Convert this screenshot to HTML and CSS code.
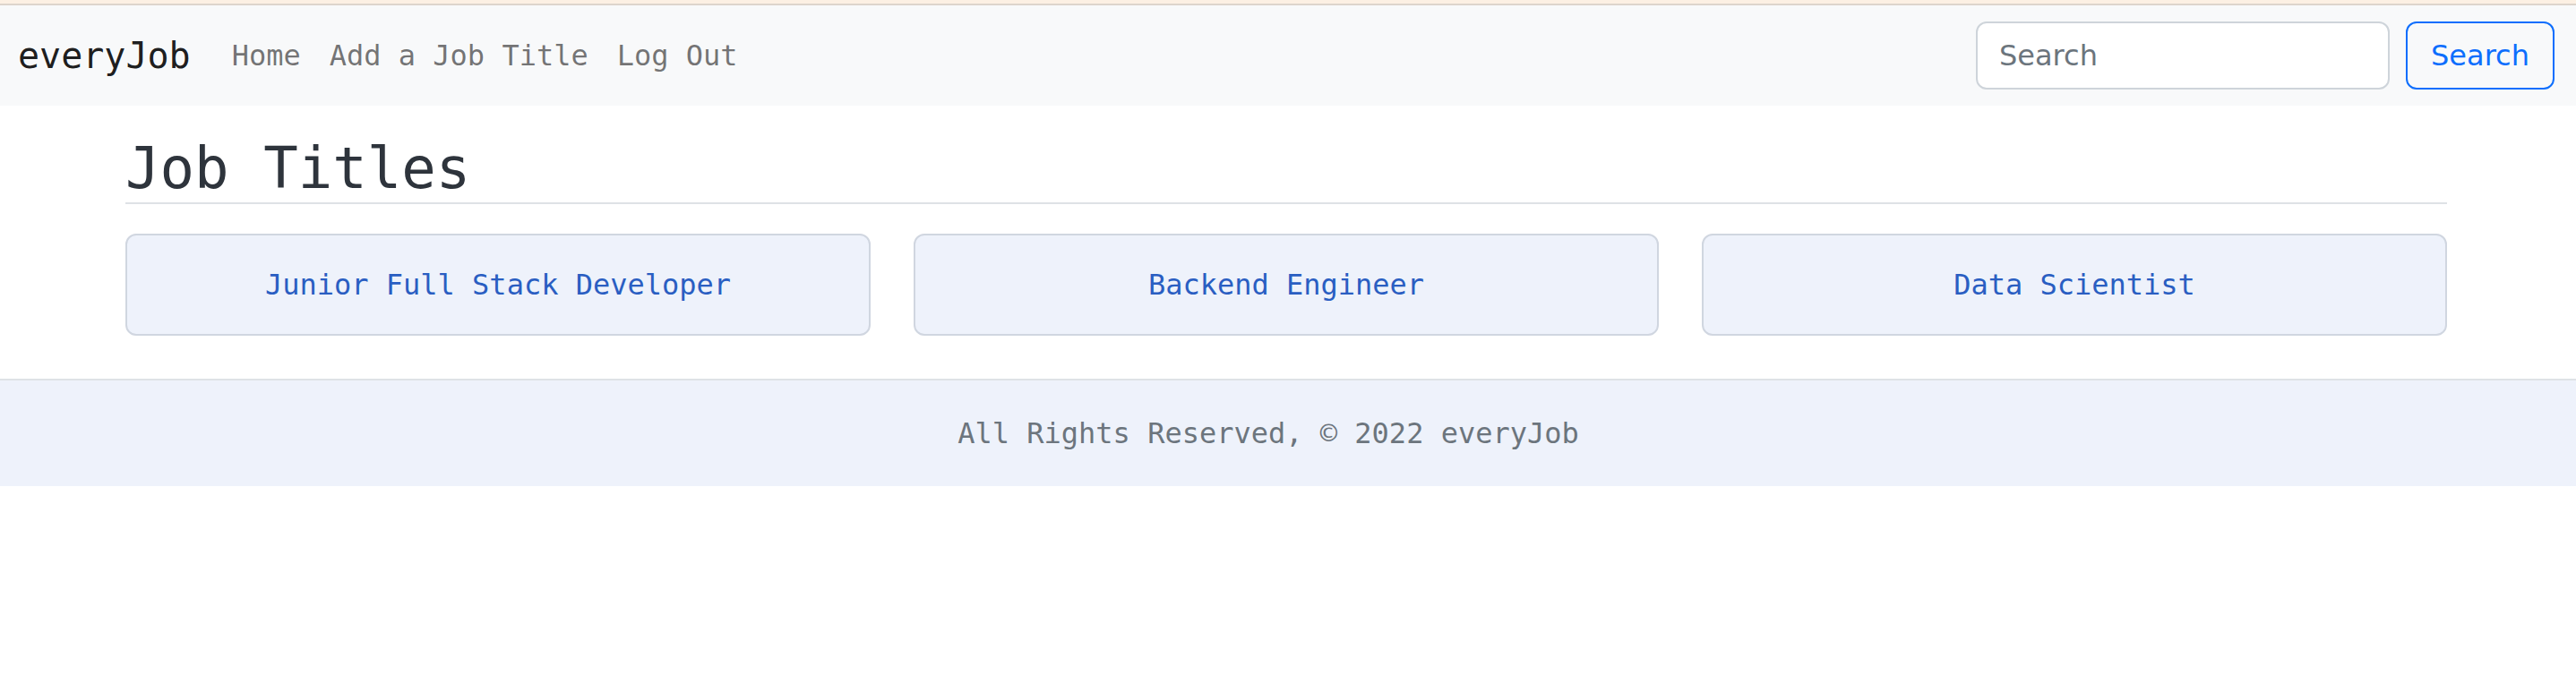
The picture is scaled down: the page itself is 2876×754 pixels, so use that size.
FILE: index.html
```html
<!DOCTYPE html>
<html lang="en">
<head>
<meta charset="utf-8">
<title>everyJob - Job Titles</title>
<link rel="stylesheet" href="styles.css">
</head>
<body>
<div class="top-strip"></div>
<nav class="navbar">
  <div class="nav-left">
    <a class="brand" href="#">everyJob</a>
    <ul class="nav-links">
      <li><a href="#">Home</a></li>
      <li><a href="#">Add a Job Title</a></li>
      <li><a href="#">Log Out</a></li>
    </ul>
  </div>
  <form class="search-form">
    <input class="search-input" type="search" placeholder="Search">
    <button class="search-btn" type="button">Search</button>
  </form>
</nav>
<main class="container">
  <h2 class="page-title">Job Titles</h2>
  <div class="job-grid">
    <a class="job-card" href="#">Junior Full Stack Developer</a>
    <a class="job-card" href="#">Backend Engineer</a>
    <a class="job-card" href="#">Data Scientist</a>
  </div>
</main>
<footer class="footer">
  <p class="footer-text">All Rights Reserved, © 2022 everyJob</p>
</footer>
</body>
</html>
```

FILE: styles.css
```css
* {
  box-sizing: border-box;
}

html, body {
  margin: 0;
  padding: 0;
  background: #ffffff;
}

body {
  font-family: "DejaVu Sans Mono", "Liberation Mono", monospace;
  color: #212529;
}

a {
  text-decoration: none;
}

.top-strip {
  height: 6px;
  background: #fcf0e3;
  border-bottom: 2px solid #ddd4cc;
}

.navbar {
  height: 112px;
  background: #f8f9fa;
  display: flex;
  align-items: center;
  justify-content: space-between;
  padding: 16px 24px 16px 20px;
}

.nav-left {
  display: flex;
  align-items: center;
}

.brand {
  font-size: 40px;
  line-height: 60px;
  padding: 10px 0;
  margin-right: 30px;
  color: rgba(0, 0, 0, 0.9);
}

.nav-links {
  list-style: none;
  display: flex;
  margin: 0;
  padding: 0;
}

.nav-links a {
  display: block;
  font-size: 32px;
  line-height: 48px;
  padding: 16px 16px;
  color: rgba(0, 0, 0, 0.55);
}

.search-form {
  display: flex;
  align-items: center;
  gap: 18px;
  margin: 0;
}

.search-input {
  width: 462px;
  height: 76px;
  font-family: "DejaVu Sans", sans-serif;
  font-size: 32px;
  padding: 12px 24px;
  border: 2px solid #ced4da;
  border-radius: 12px;
  background: #ffffff;
  color: #212529;
  outline: none;
}

.search-input::placeholder {
  color: #6c757d;
}

.search-btn {
  height: 76px;
  width: 166px;
  font-family: "DejaVu Sans", sans-serif;
  font-size: 32px;
  padding: 12px 24px;
  border: 2px solid #0d6efd;
  border-radius: 12px;
  background: transparent;
  color: #0d6efd;
}

.container {
  margin: 0 144px 0 140px;
  padding-top: 32px;
}

.page-title {
  margin: 0;
  font-weight: 400;
  font-size: 64px;
  line-height: 76px;
  color: #2e343c;
  border-bottom: 2px solid #dee2e6;
}

.job-grid {
  display: grid;
  grid-template-columns: repeat(3, 1fr);
  gap: 48px;
  margin-top: 33px;
}

.job-card {
  display: block;
  height: 114px;
  padding: 31px 16px;
  text-align: center;
  font-size: 32px;
  line-height: 48px;
  color: #2a5ec2;
  background: #eef2fb;
  border: 2px solid #d0d6e0;
  border-radius: 12px;
}

.footer {
  margin-top: 48px;
  background: #eef2fb;
  border-top: 2px solid #dee2e6;
  padding: 35px 44px 35px 0;
  text-align: center;
}

.footer-text {
  margin: 0;
  font-size: 32px;
  line-height: 48px;
  color: #6c757d;
}
```
